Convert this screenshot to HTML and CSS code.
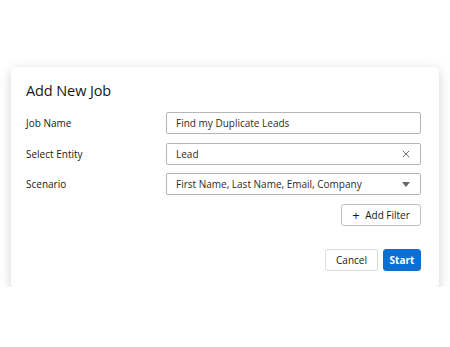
FILE: index.html
```html
<!DOCTYPE html>
<html lang="en">
<head>
  <meta charset="UTF-8">
  <title>Add New Job</title>
  <link rel="stylesheet" href="styles.css">
</head>
<body>
  <div class="modal">
    <h1>Add New Job</h1>

    <div class="form-row">
      <label>Job Name</label>
      <div class="field">Find my Duplicate Leads</div>
    </div>

    <div class="form-row">
      <label>Select Entity</label>
      <div class="field">
        <span>Lead</span>
        <svg class="field-icon" viewBox="0 0 10 10" width="8" height="8">
          <path d="M1 1 L9 9 M9 1 L1 9" stroke="#666" stroke-width="1.2" fill="none"/>
        </svg>
      </div>
    </div>

    <div class="form-row">
      <label>Scenario</label>
      <div class="field">
        <span>First Name, Last Name, Email, Company</span>
        <svg class="field-icon" viewBox="0 0 10 6" width="8" height="5">
          <path d="M0 0 L10 0 L5 6 Z" fill="#666"/>
        </svg>
      </div>
    </div>

    <div class="filter-row">
      <button class="btn btn-outline"><span class="plus">+</span> Add Filter</button>
    </div>

    <div class="actions">
      <button class="btn btn-outline">Cancel</button>
      <button class="btn btn-primary">Start</button>
    </div>
  </div>
</body>
</html>
```

FILE: styles.css
```css
* {
  margin: 0;
  padding: 0;
  box-sizing: border-box;
}

body {
  font-family: "Open Sans", "Noto Sans", sans-serif;
  background-color: #fff;
  color: #181818;
  padding: 67px 11px 0;
}

.modal {
  width: 428px;
  height: 220px;
  background-color: #fff;
  border-radius: 4px;
  box-shadow: 0 3px 12px rgba(0, 0, 0, 0.18);
  padding: 13px 18px 0 15px;
}

h1 {
  font-size: 14.5px;
  font-weight: 400;
  letter-spacing: -0.1px;
  margin-bottom: 10px;
  line-height: 22px;
}

.form-row {
  display: flex;
  align-items: center;
  margin-bottom: 8.5px;
}

.form-row label {
  width: 140px;
  font-size: 10px;
}

.field {
  flex: 1;
  height: 22px;
  border: 1px solid #b5b5b5;
  border-radius: 2px;
  display: flex;
  align-items: center;
  justify-content: space-between;
  padding: 0 10px 0 9px;
  font-size: 10px;
  color: #2b2b2b;
}

.field-icon {
  display: block;
}

.filter-row {
  display: flex;
  justify-content: flex-end;
}

.filter-row .btn {
  width: 80px;
}

.btn {
  font-family: inherit;
  font-size: 10px;
  height: 22px;
  border-radius: 3px;
  background: #fff;
  color: #181818;
  cursor: pointer;
}

.btn-outline {
  border: 1px solid #c0c0c0;
}

.plus {
  font-size: 13px;
  margin-right: 3px;
  line-height: 1;
  vertical-align: -1px;
}

.actions {
  display: flex;
  justify-content: flex-end;
  gap: 5px;
  margin-top: 23px;
}

.actions .btn-outline {
  width: 53px;
  border-color: #dcdcdc;
}

.btn-primary {
  width: 38px;
  background-color: #0b70d2;
  border: 1px solid #0b70d2;
  color: #fff;
  font-weight: 700;
}
```
